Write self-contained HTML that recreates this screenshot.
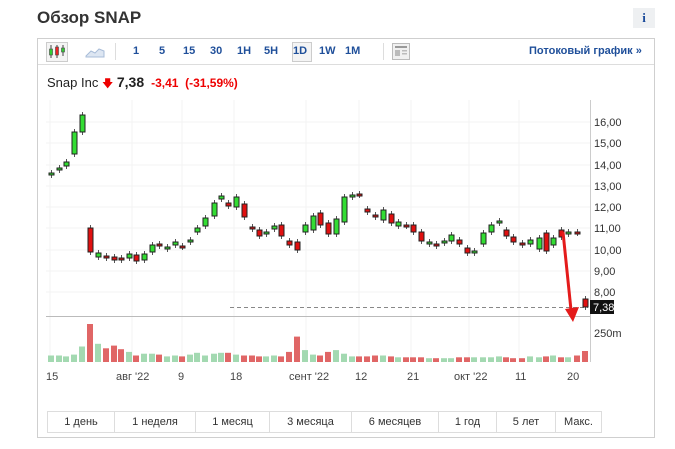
<!DOCTYPE html>
<html><head><meta charset="utf-8"><style>
body{margin:0;width:675px;height:449px;background:#fff;font-family:"Liberation Sans",Arial,sans-serif;position:relative;overflow:hidden}
.t{position:absolute;left:37px;top:8px;font-size:17px;font-weight:bold;color:#333}
.info{position:absolute;left:633px;top:8px;width:22px;height:20px;background:#eef0f2;color:#1a4a9a;font:bold 13px "Liberation Serif",serif;text-align:center;line-height:20px}
.box{position:absolute;left:37px;top:38px;width:618px;height:400px;border:1px solid #cfcfcf;box-sizing:border-box}
.tb{position:absolute;left:0;top:0;width:616px;height:25px;border-bottom:1px solid #ddd;background:#fff}
.tb span{position:absolute;top:6px;font-size:11px;font-weight:bold;color:#1f4f9a}
.hd{position:absolute;left:9px;top:35px;font-size:13px;color:#222}
.btns{position:absolute;left:9px;top:372px;height:20px;width:553px;border:1px solid #ddd;display:flex}
.btns div{border-right:1px solid #ddd;font-size:11px;color:#333;text-align:center;line-height:20px;box-sizing:border-box}
</style></head><body>
<div class="t">Обзор SNAP</div>
<div class="info">i</div>
<div class="box">
<div class="tb">
<div style="position:absolute;left:8px;top:3px;width:20px;height:18px;border:1px solid #ccc;background:#f4f4f4"></div>
<svg style="position:absolute;left:10px;top:5px" width="18" height="15"><line x1="3" y1="1" x2="3" y2="14" stroke="#444"/><rect x="1.5" y="5" width="3" height="6" fill="#3c3" stroke="#444" stroke-width=".6"/><line x1="9" y1="1" x2="9" y2="14" stroke="#444"/><rect x="7.5" y="3" width="3" height="8" fill="#e22" stroke="#444" stroke-width=".6"/><line x1="15" y1="1" x2="15" y2="12" stroke="#444"/><rect x="13.5" y="4" width="3" height="4" fill="#3c3" stroke="#444" stroke-width=".6"/></svg>
<svg style="position:absolute;left:47px;top:7px" width="20" height="12"><path d="M1 10 L6 5 L10 7 L14 3 L19 5 L19 11 L1 11Z" fill="#dde6f2" stroke="#a8bcd8"/></svg>
<div style="position:absolute;left:77px;top:4px;width:1px;height:17px;background:#ddd"></div>
<span style="left:95px">1</span><span style="left:121px">5</span><span style="left:145px">15</span><span style="left:172px">30</span><span style="left:199px">1H</span><span style="left:226px">5H</span>
<div style="position:absolute;left:254px;top:3px;width:18px;height:18px;border:1px solid #ccc;background:#f4f4f4"></div>
<span style="left:255px">1D</span><span style="left:281px">1W</span><span style="left:307px">1M</span>
<div style="position:absolute;left:345px;top:4px;width:1px;height:17px;background:#ddd"></div>
<svg style="position:absolute;left:354px;top:4px" width="18" height="17"><rect x=".5" y=".5" width="17" height="16" fill="#f0f0f0" stroke="#bbb"/><rect x="3" y="3" width="12" height="2" fill="#999"/><rect x="3" y="7" width="5" height="6" fill="#bbb"/><rect x="10" y="7" width="5" height="1.5" fill="#bbb"/><rect x="10" y="10" width="5" height="1.5" fill="#bbb"/></svg>
<span style="left:491px">Потоковый график »</span>
</div>
<div class="hd">Snap Inc <span style="color:#e00;font-size:11px">&#129095;</span> <b style="font-size:14px">7,38</b> <b style="color:#e00;font-size:12px">&nbsp;-3,41 &nbsp;(-31,59%)</b></div>
<div class="btns"><div style="width:67px">1 день</div><div style="width:81px">1 неделя</div><div style="width:74px">1 месяц</div><div style="width:82px">3 месяца</div><div style="width:87px">6 месяцев</div><div style="width:58px">1 год</div><div style="width:59px">5 лет</div><div style="width:45px;border:none">Макс.</div></div>
</div>
<svg style="position:absolute;left:0;top:0" width="675" height="449">
<g stroke="#f3f3f3" stroke-width="1">
<line x1="46" y1="122" x2="590" y2="122"/><line x1="46" y1="143" x2="590" y2="143"/><line x1="46" y1="165" x2="590" y2="165"/><line x1="46" y1="186" x2="590" y2="186"/><line x1="46" y1="207" x2="590" y2="207"/><line x1="46" y1="228" x2="590" y2="228"/><line x1="46" y1="250" x2="590" y2="250"/><line x1="46" y1="271" x2="590" y2="271"/><line x1="46" y1="292" x2="590" y2="292"/>
<line x1="50" y1="100" x2="50" y2="362"/><line x1="132" y1="100" x2="132" y2="362"/><line x1="182" y1="100" x2="182" y2="362"/><line x1="234" y1="100" x2="234" y2="362"/><line x1="306" y1="100" x2="306" y2="362"/><line x1="359" y1="100" x2="359" y2="362"/><line x1="411" y1="100" x2="411" y2="362"/><line x1="469" y1="100" x2="469" y2="362"/><line x1="519" y1="100" x2="519" y2="362"/>
</g>
<line x1="590.5" y1="100" x2="590.5" y2="362" stroke="#ccc"/>
<line x1="46" y1="316.5" x2="590" y2="316.5" stroke="#bbb"/>
<line x1="230" y1="307.5" x2="588" y2="307.5" stroke="#888" stroke-dasharray="4,3"/>
<g font-size="11" fill="#333">
<text x="594" y="126">16,00</text><text x="594" y="147">15,00</text><text x="594" y="169">14,00</text><text x="594" y="190">13,00</text><text x="594" y="211">12,00</text><text x="594" y="232">11,00</text><text x="594" y="254">10,00</text><text x="594" y="275">9,00</text><text x="594" y="296">8,00</text><text x="594" y="337">250m</text>
</g>
<rect x="590" y="300" width="24" height="14" fill="#111"/><text x="593" y="311" font-size="11" fill="#fff">7,38</text>
<g font-size="11" fill="#444">
<text x="46" y="380">15</text><text x="116" y="380">авг '22</text><text x="178" y="380">9</text><text x="230" y="380">18</text><text x="289" y="380">сент '22</text><text x="355" y="380">12</text><text x="407" y="380">21</text><text x="454" y="380">окт '22</text><text x="515" y="380">11</text><text x="567" y="380">20</text>
</g>
<g id="vol"></g>
<g id="w" stroke="#555" stroke-width="1"></g>
<g id="c" stroke="#222" stroke-width="1"></g>
<line x1="563" y1="232" x2="571" y2="310" stroke="#e41b1b" stroke-width="3"/>
<path d="M565 309 L579 307 L573 322 Z" fill="#e41b1b"/>
</svg>
<script>
var C=[[51,173,175,1],[59,168,170,1],[66,162,166,1],[74,132,154,1],[82,115,132,1],[90,228,252,0],[98,253,257,1],[106,256,258,0],[114,257,260,0],[121,258,260,0],[129,254,258,1],[136,255,261,0],[144,254,260,1],[152,245,252,1],[159,244,246,0],[167,247,249,1],[175,242,245,1],[182,246,247,0],[190,240,242,1],[197,228,232,1],[205,218,226,1],[214,203,216,1],[221,196,199,1],[228,203,206,0],[236,197,207,1],[244,204,217,0],[252,227,229,0],[259,230,236,0],[266,232,234,1],[274,226,229,1],[281,225,236,0],[289,241,245,0],[297,242,250,0],[305,225,232,1],[313,216,230,1],[320,213,225,0],[328,223,234,0],[336,219,234,1],[344,197,222,1],[352,195,197,1],[359,194,195,0],[367,209,212,0],[375,215,217,0],[383,210,220,1],[391,214,223,0],[398,222,226,1],[406,225,226,0],[413,225,232,0],[421,232,241,0],[429,242,244,1],[436,244,246,0],[444,241,243,1],[451,235,241,1],[459,240,244,0],[467,248,253,0],[474,251,253,1],[483,233,244,1],[491,225,232,1],[499,221,223,1],[506,230,236,0],[513,237,242,0],[522,243,245,0],[530,240,244,1],[539,238,249,1],[546,233,251,0],[553,238,245,1],[561,230,237,0],[568,232,234,1],[577,232,233,0],[585,299,307,0]];
var V=[5,5,4,6,15,40,18,13,16,12,9,5,7,7,6,4,5,4,6,8,5,7,8,8,6,5,5,4,4,5,4,9,26,11,6,5,9,11,7,4,4,4,5,5,4,3,3,3,3,2,2,2,2,3,3,3,3,3,4,3,2,2,4,3,4,5,3,3,5,10];
var s='',v='',w='';
C.forEach(function(c,i){var x=c[0],t=c[1],b=c[2];var h=Math.max(b-t,2);
w+='<line x1="'+(x+.5)+'" y1="'+(t-3)+'" x2="'+(x+.5)+'" y2="'+(b+3)+'"/>';
s+='<rect x="'+(x-2)+'" y="'+t+'" width="5" height="'+h+'" fill="'+(c[3]?'#33dd33':'#e01010')+'"/>';
var hv=V[i]*0.9+2;v+='<rect x="'+(x-3)+'" y="'+(362-hv)+'" width="6" height="'+hv+'" fill="'+(c[3]?'#a3d9b1':'#e06666')+'"/>';});
document.getElementById('w').innerHTML=w;document.getElementById('c').innerHTML=s;document.getElementById('vol').innerHTML=v;
</script>
</body></html>
